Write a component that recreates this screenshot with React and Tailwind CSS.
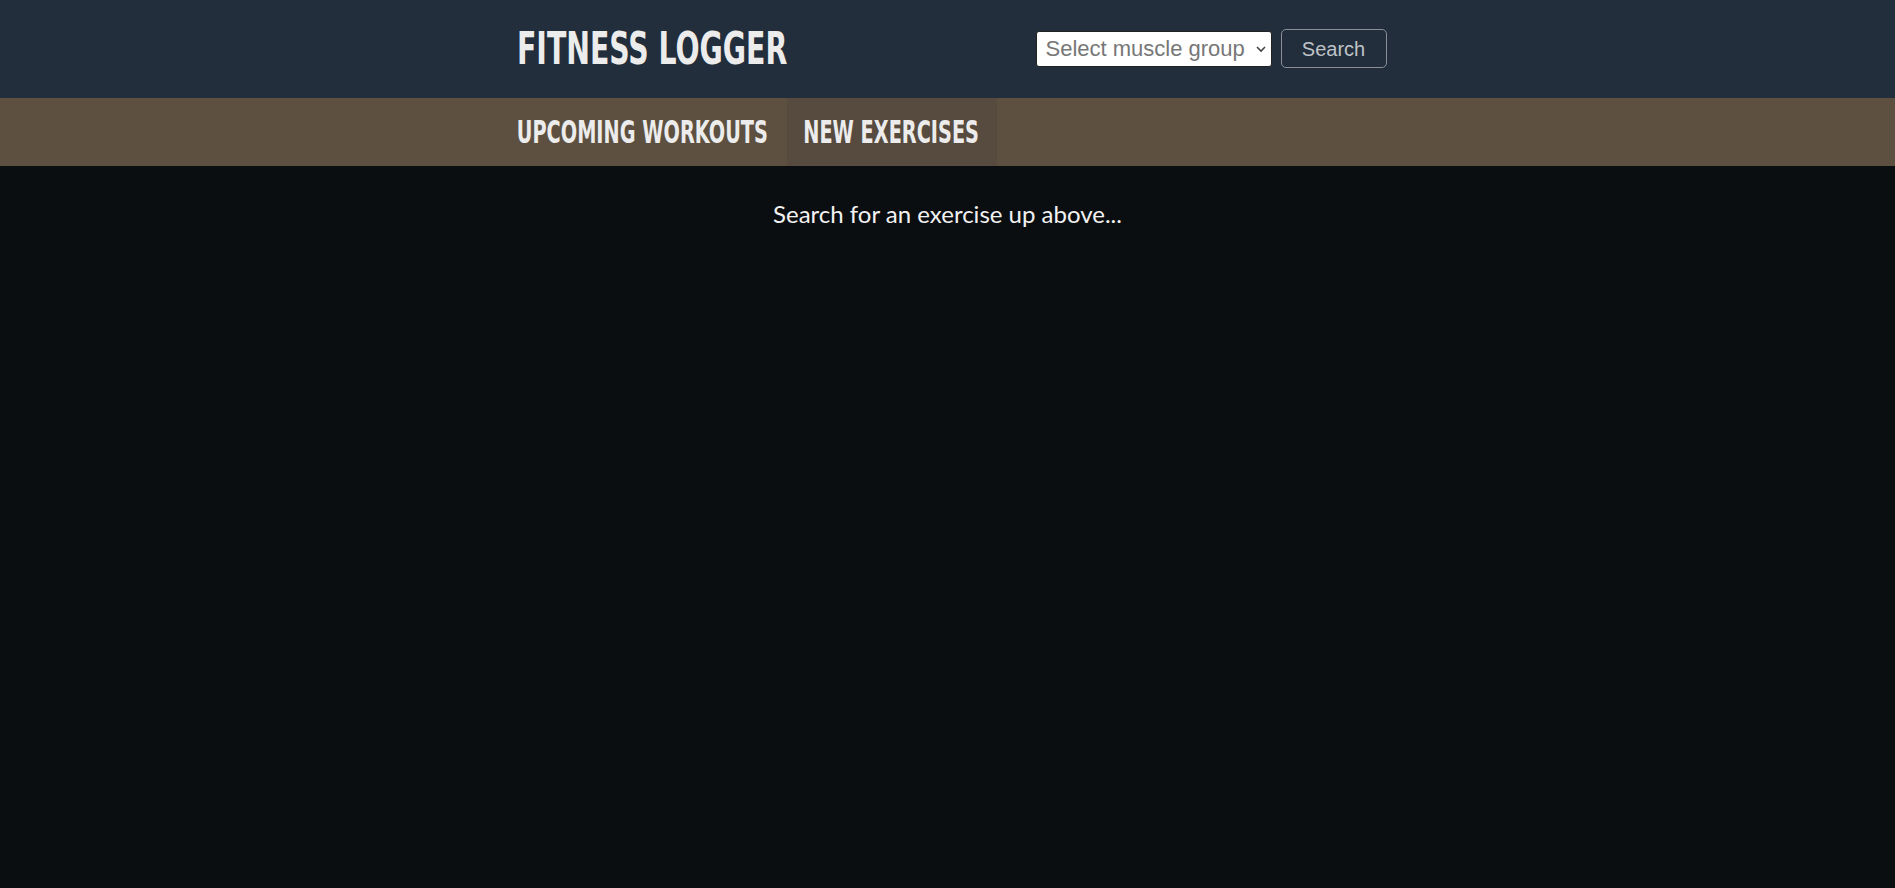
import React, { useState } from 'react'

const heading = { fontFamily: '"DejaVu Sans Condensed", "DejaVu Sans", sans-serif' }

export default function App() {
  const [group, setGroup] = useState('')
  const [tab, setTab] = useState('new')
  return (
    <div className="min-h-screen bg-[#0b0e11] text-[#ededed]" style={{ fontFamily: 'Lato, "Open Sans", sans-serif' }}>
      <header className="bg-[#222e3b] h-[98px]">
        <div className="w-[900px] mx-auto h-full flex items-center justify-between pl-[19px] pr-[11px]">
          <h1 className="w-[280px] text-[45px] font-bold text-[#ececec] uppercase whitespace-nowrap" style={heading}>
            <span className="inline-block scale-x-[0.7] origin-left">Fitness Logger</span>
          </h1>
          <div className="flex items-center gap-[9px] mb-[1px]">
            <div className="relative">
              <select
                value={group}
                onChange={e => setGroup(e.target.value)}
                className="appearance-none w-[236px] h-[36px] bg-white border border-[#222] rounded-[3px] pl-[9px] pr-6 text-[22px] text-[#777] focus:outline-none"
                style={{ fontFamily: '"Liberation Sans", Arial, sans-serif' }}
              >
                <option value="">Select muscle group</option>
                <option value="chest">Chest</option>
                <option value="back">Back</option>
                <option value="legs">Legs</option>
              </select>
              <svg className="absolute right-[6px] top-[15px] pointer-events-none" width="10" height="7" viewBox="0 0 10 7" fill="none">
                <path d="M1 1l4 4 4-4" stroke="#444" strokeWidth="1.6" />
              </svg>
            </div>
            <button className="w-[106px] h-[39px] border border-[#8a8f96] rounded-[5px] text-[20px] text-[#bfc3c8] bg-transparent" style={{ fontFamily: '"Liberation Sans", Arial, sans-serif' }}>Search</button>
          </div>
        </div>
      </header>
      <nav className="bg-[#5d5040] h-[68px]">
        <div className="w-[900px] mx-auto h-full flex">
          <button onClick={() => setTab('upcoming')} className={`w-[289px] h-full flex items-center justify-center text-[32px] font-bold uppercase text-[#ececec] whitespace-nowrap ${tab === 'upcoming' ? 'bg-[#574a3e]' : ''}`} style={heading}>
            <span className="inline-block scale-x-[0.67]">Upcoming Workouts</span>
          </button>
          <button onClick={() => setTab('new')} className={`w-[210px] h-full flex items-center justify-center text-[32px] font-bold uppercase text-[#ececec] whitespace-nowrap ${tab === 'new' ? 'bg-[#574a3e]' : ''}`} style={heading}>
            <span className="inline-block scale-x-[0.67]">New Exercises</span>
          </button>
        </div>
      </nav>
      <main className="pt-[30px] text-center">
        <p className="text-[24px] text-[#f2f2f2]">Search for an exercise up above...</p>
      </main>
    </div>
  )
}
